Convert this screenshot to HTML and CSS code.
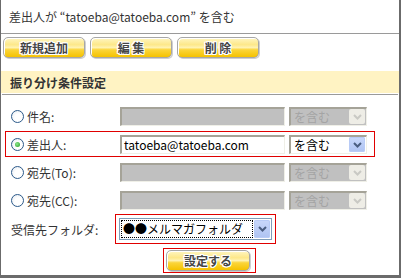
FILE: index.html
```html
<!DOCTYPE html>
<html lang="ja">
<head>
    <meta charset="UTF-8">
    <title>振り分け条件設定</title>
    <link rel="stylesheet" href="styles.css">
</head>
<body>

<div class="frame">

    <!-- Current rule summary -->
    <div class="summary">差出人が “tatoeba@tatoeba.com” を含む</div>

    <!-- Toolbar -->
    <div class="toolbar">
        <span class="btn">新規追加</span>
        <span class="btn">編 集</span>
        <span class="btn">削 除</span>
    </div>

    <div class="section-title">振り分け条件設定</div>

    <div class="form">
        <div class="row">
            <span class="radio"></span>
            <span class="label">件名:</span>
            <span class="field disabled"></span>
            <span class="select disabled"><span class="select-text">を含む</span><span class="arrow"><svg width="9" height="6" viewBox="0 0 9 6"><path d="M1 1 L4.5 4.5 L8 1" fill="none" stroke="#c9c9c4" stroke-width="2"/></svg></span></span>
        </div>
        <div class="row marked">
            <span class="radio checked"></span>
            <span class="label">差出人:</span>
            <span class="field">tatoeba@tatoeba.com</span>
            <span class="select"><span class="select-text">を含む</span><span class="arrow blue"><svg width="9" height="6" viewBox="0 0 9 6"><path d="M1 1 L4.5 4.5 L8 1" fill="none" stroke="#4a5d80" stroke-width="2"/></svg></span></span>
        </div>
        <div class="row">
            <span class="radio"></span>
            <span class="label">宛先(To):</span>
            <span class="field disabled"></span>
            <span class="select disabled"><span class="select-text">を含む</span><span class="arrow"><svg width="9" height="6" viewBox="0 0 9 6"><path d="M1 1 L4.5 4.5 L8 1" fill="none" stroke="#c9c9c4" stroke-width="2"/></svg></span></span>
        </div>
        <div class="row">
            <span class="radio"></span>
            <span class="label">宛先(CC):</span>
            <span class="field disabled"></span>
            <span class="select disabled"><span class="select-text">を含む</span><span class="arrow"><svg width="9" height="6" viewBox="0 0 9 6"><path d="M1 1 L4.5 4.5 L8 1" fill="none" stroke="#c9c9c4" stroke-width="2"/></svg></span></span>
        </div>

        <div class="folder-row">
            <span class="folder-label">受信先フォルダ:</span>
            <span class="mark-box">
                <span class="folder-select"><span class="focus-text">●●メルマガフォルダ</span><span class="arrow blue"><svg width="9" height="6" viewBox="0 0 9 6"><path d="M1 1 L4.5 4.5 L8 1" fill="none" stroke="#4a5d80" stroke-width="2"/></svg></span></span>
            </span>
        </div>

        <div class="submit-row">
            <span class="submit-box"><span class="btn">設定する</span></span>
        </div>
    </div>

</div>

</body>
</html>
```
FILE: styles.css
```css
body {
    margin: 0;
    background: #fff;
    font-family: "Noto Sans CJK JP", "DejaVu Sans", sans-serif;
    font-size: 12px;
    color: #333;
}

/* Outer window frame */
.frame {
    width: 398px;
    height: 275px;
    border-left: 1px solid #6b6b6b;
    border-right: 2px solid #6b6b6b;
    border-bottom: 3px solid #6b6b6b;
    overflow: hidden;
}

/* Summary line */
.summary {
    height: 33px;
    line-height: 34px;
    padding-left: 8px;
    border-bottom: 1px solid #9a9a9a;
    color: #333;
}

/* Toolbar buttons */
.toolbar {
    display: flex;
    gap: 5px;
    padding: 3px 0 0 2px;
    height: 34px;
}

.btn {
    display: inline-flex;
    align-items: center;
    justify-content: center;
    box-sizing: border-box;
    width: 82px;
    height: 21px;
    border: 1px solid #a7a7a7;
    border-radius: 5px;
    background: linear-gradient(#fff6c2 0%, #fde88a 35%, #fff2b0 50%, #fbd53a 62%, #f5c200 100%);
    box-shadow: inset 1px 1px 0 #fff, 1px 1px 0 #cfcfcf;
    font-weight: bold;
    font-size: 12px;
    color: #454545;
    text-shadow: -1px 0 #fff, 1px 0 #fff, 0 -1px #fff, 0 1px #fff, 1px 1px #fff, -1px -1px #fff, 1px -1px #fff, -1px 1px #fff;
    white-space: pre;
}

/* Section heading */
.section-title {
    height: 22px;
    line-height: 23px;
    padding-left: 9px;
    background: #fff3c3;
    font-weight: bold;
    color: #333;
    border-bottom: 1px solid #fff;
    box-shadow: 0 2px 0 -1px #9a9a9a;
    margin-bottom: 2px;
}

/* Condition rows */
.form {
    padding-top: 6px;
}

.row {
    display: flex;
    align-items: center;
    box-sizing: border-box;
    height: 28px;
    margin: 0 24px 0 4px;
    padding-left: 5px;
    border: 1px solid transparent;
}

.row.marked {
    height: 26px;
    margin-top: 1px;
    margin-bottom: 1px;
    border-color: #e00000;
}

.radio {
    box-sizing: border-box;
    width: 13px;
    height: 13px;
    border-radius: 50%;
    border: 1px solid #2c5a8a;
    background: radial-gradient(circle at 60% 60%, #fff 40%, #dfe6ee 100%);
    display: flex;
    align-items: center;
    justify-content: center;
}

.radio.checked::after {
    content: "";
    width: 5px;
    height: 5px;
    border-radius: 50%;
    background: radial-gradient(circle at 40% 40%, #8ee88e, #1f9a1f);
}

.label {
    width: 93px;
    padding-left: 3px;
    color: #333;
}

.field {
    box-sizing: border-box;
    width: 165px;
    height: 19px;
    line-height: 16px;
    padding-left: 2px;
    border-top: 2px solid #a5a398;
    border-left: 2px solid #a5a398;
    border-right: 1px solid #efefe7;
    border-bottom: 1px solid #efefe7;
    background: #fff;
    color: #000;
}

.field.disabled {
    background: #c0c0c0;
}

.select {
    box-sizing: border-box;
    display: flex;
    align-items: center;
    width: 78px;
    height: 19px;
    margin-left: 4px;
    border-top: 2px solid #a5a398;
    border-left: 2px solid #a5a398;
    border-right: 1px solid #efefe7;
    border-bottom: 1px solid #efefe7;
    background: #fff;
    color: #000;
}

.select-text {
    flex: 1;
    padding-left: 3px;
    line-height: 16px;
}

.select.disabled {
    background: #c0c0c0;
    color: #a4a4a4;
}

.arrow {
    display: flex;
    align-items: center;
    justify-content: center;
    width: 16px;
    height: 15px;
    margin-right: 1px;
    background: #eeede6;
    border-radius: 2px;
}

.arrow.blue {
    background: linear-gradient(#c9d8fb, #aec3f2);
    box-shadow: inset 0 0 0 1px #b8cbf6;
}

/* Folder selection */
.folder-row {
    display: flex;
    align-items: center;
    margin-top: 0;
    padding-left: 10px;
    height: 30px;
}

.folder-label {
    width: 104px;
    color: #333;
}

.mark-box {
    box-sizing: border-box;
    display: flex;
    align-items: center;
    width: 161px;
    height: 30px;
    padding-left: 3px;
    border: 1px solid #e00000;
}

.folder-select {
    box-sizing: border-box;
    display: flex;
    align-items: center;
    width: 153px;
    height: 22px;
    padding: 1px;
    border: 1px solid #7f9db9;
    background: #fff;
    color: #000;
}

.focus-text {
    flex: 1;
    height: 18px;
    line-height: 17px;
    padding-left: 2px;
    box-sizing: border-box;
    outline: 1px dotted #000;
    outline-offset: -1px;
    font-size: 12px;
}

.folder-select .arrow {
    height: 18px;
    margin: 0 0 0 1px;
}

/* Submit */
.submit-row {
    display: flex;
    padding: 4px 0 0 162px;
}

.submit-box {
    box-sizing: border-box;
    display: flex;
    align-items: center;
    width: 93px;
    height: 25px;
    padding-left: 2px;
    border: 1px solid #e00000;
}

.submit-box .btn {
    width: 84px;
}
```
